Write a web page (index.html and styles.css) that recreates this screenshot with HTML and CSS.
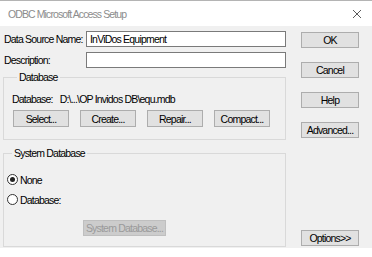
FILE: index.html
```html
<!DOCTYPE html>
<html lang="en">
<head>
  <meta charset="UTF-8" />
  <title>ODBC Microsoft Access Setup</title>
  <link rel="stylesheet" href="styles.css">
</head>
<body>
  <div class="window">
    <div class="titlebar">
      <span class="title">ODBC Microsoft Access Setup</span>
      <svg class="close" width="10" height="10" viewBox="0 0 10 10">
        <path d="M1 1 L9 9 M9 1 L1 9" stroke="#5a5a5a" stroke-width="1" fill="none" />
      </svg>
    </div>

    <div class="dialog">
      <div class="left">
        <div class="field">
          <label for="dsn">Data Source Name:</label>
          <input id="dsn" type="text" value="InViDos Equipment" />
        </div>
        <div class="field">
          <label for="desc">Description:</label>
          <input id="desc" type="text" value="" />
        </div>

        <fieldset class="group db-group">
          <legend>Database</legend>
          <div class="db-path">
            <span>Database:</span>
            <span class="path">D:\...\OP Invidos DB\equ.mdb</span>
          </div>
          <div class="db-buttons">
            <button>Select...</button>
            <button>Create...</button>
            <button>Repair...</button>
            <button>Compact...</button>
          </div>
        </fieldset>

        <fieldset class="group sys-group">
          <legend>System Database</legend>
          <label class="radio"><input type="radio" name="sysdb" checked /> None</label>
          <label class="radio"><input type="radio" name="sysdb" /> Database:</label>
          <button class="sys-btn" disabled>System Database...</button>
        </fieldset>
      </div>

      <div class="right">
        <button>OK</button>
        <button>Cancel</button>
        <button>Help</button>
        <button>Advanced...</button>
        <button class="options">Options&gt;&gt;</button>
      </div>
    </div>
  </div>
</body>
</html>
```

FILE: styles.css
```css
* { margin: 0; padding: 0; box-sizing: border-box; }
body {
  background: #ffffff;
  font-family: "Liberation Sans", Arial, sans-serif;
  font-size: 10.5px;
  letter-spacing: -0.8px;
  color: #000;
  white-space: nowrap;
}
.window {
  width: 372px;
}
.titlebar {
  height: 26px;
  background: #ffffff;
  border-top: 1px solid #b4b4b4;
  display: flex;
  align-items: center;
  justify-content: space-between;
  padding: 0 10px 0 8px;
}
.title {
  font-size: 10.5px;
  letter-spacing: -0.9px;
  color: #8c8c8c;
}
.dialog {
  height: 222px;
  background: #f0f0f0;
  display: flex;
  padding: 5px 0 1px 3px;
}
.left {
  width: 284px;
  display: flex;
  flex-direction: column;
}
.field {
  display: flex;
  align-items: center;
  height: 16px;
  margin-bottom: 5px;
}
.field label {
  width: 83px;
  padding-left: 1px;
}
.field input {
  width: 200px;
  height: 16px;
  border: 1px solid #7a7a7a;
  background: #fff;
  font: inherit;
  letter-spacing: inherit;
  padding-left: 3px;
  outline: none;
}
.group {
  width: 283px;
  border: 1px solid #d9d9d9;
}
.group legend {
  line-height: 13px;
  margin-left: 5px;
  padding: 0 2px;
}
.db-group {
  margin-top: -2px;
  padding: 9px 0 12px 8px;
}
.db-path {
  display: flex;
  gap: 7px;
  line-height: 13px;
}
.db-buttons {
  display: flex;
  gap: 11px;
  margin-top: 4px;
  padding-left: 1px;
}
button {
  width: 56px;
  height: 17px;
  background: #e1e1e1;
  border: 1px solid #adadad;
  font: inherit;
  letter-spacing: inherit;
  color: #000;
}
.sys-group {
  margin-top: 7px;
  flex: 1;
  padding: 13px 0 0 3px;
  display: flex;
  flex-direction: column;
}
.radio {
  display: flex;
  align-items: center;
  height: 13px;
  margin-bottom: 7px;
}
.radio input {
  appearance: none;
  width: 11px;
  height: 11px;
  border: 1px solid #333;
  border-radius: 50%;
  background: #fff;
  margin-right: 2px;
  display: grid;
  place-items: center;
}
.radio input:checked::after {
  content: "";
  width: 5px;
  height: 5px;
  border-radius: 50%;
  background: #222;
}
.sys-btn {
  width: 83px;
  height: 16px;
  margin-left: 76px;
  margin-top: 7px;
  background: #cccccc;
  border-color: #bfbfbf;
  color: #9a9a9a;
}
.right {
  display: flex;
  flex-direction: column;
  gap: 14px;
  margin-left: 14px;
  padding-top: 1px;
  padding-bottom: 1px;
}
.right button {
  width: 58px;
  height: 16px;
}
.right .options {
  margin-top: auto;
}
```
